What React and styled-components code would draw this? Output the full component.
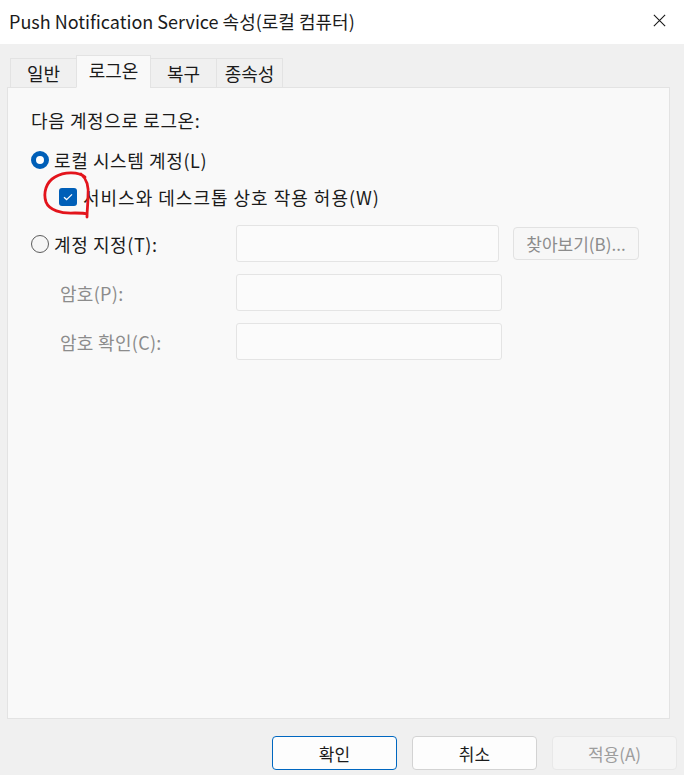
import React from "react";
import styled, { createGlobalStyle } from "styled-components";

const GlobalStyle = createGlobalStyle`
    html, body {
        margin: 0;
        padding: 0;
        background: #f0f0f0;
    }
    body {
        font-family: "Noto Sans CJK KR", "Noto Sans", sans-serif;
        color: #1b1b1b;
    }
`;

const tabs = ["일반", "로그온", "복구", "종속성"];

function Radio({ checked }) {
    return <RadioCircle $checked={checked} />;
}

function App() {
    return (
        <Window>
            <GlobalStyle />
            <TitleBar>
                <Title>Push Notification Service 속성(로컬 컴퓨터)</Title>
                <CloseIcon viewBox="0 0 16 16">
                    <path d="M2 2 L14 14 M14 2 L2 14" stroke="#1b1b1b" strokeWidth="1.2" />
                </CloseIcon>
            </TitleBar>
            <Body>
                <TabRow>
                    {tabs.map((t, i) => (
                        <Tab key={t} $active={i === 1} $w={i === 1 ? 75 : 67}>
                            {t}
                        </Tab>
                    ))}
                </TabRow>
                <Panel>
                    <Heading>다음 계정으로 로그온:</Heading>
                    <OptionRow>
                        <Radio checked />
                        <Label>로컬 시스템 계정(L)</Label>
                    </OptionRow>
                    <CheckRow>
                        <Checkbox>
                            <svg width="12" height="10" viewBox="0 0 12 10">
                                <path d="M2 5.2 L4.6 7.6 L10 2.4" fill="none" stroke="#fff" strokeWidth="1.3" />
                            </svg>
                        </Checkbox>
                        <Label $spacing={1}>서비스와 데스크톱 상호 작용 허용(W)</Label>
                        {/* red marker annotation drawn over the checkbox */}
                        <Scribble viewBox="0 0 52 48">
                            <path
                                d="M44 6 C38 1 24 0 14 6 C5 11 2 22 5 31 C8 39 20 43 34 42 C40 42 44 42 46 43 M40 3 C46 8 48 16 47 26 C47 33 46 39 46 46"
                                fill="none"
                                stroke="#e3141c"
                                strokeWidth="2.8"
                                strokeLinecap="round"
                                strokeLinejoin="round"
                            />
                        </Scribble>
                    </CheckRow>
                    <FormGrid>
                        <OptionRow>
                            <Radio />
                            <Label>계정 지정(T):</Label>
                        </OptionRow>
                        <Field $w={263} />
                        <BrowseButton>찾아보기(B)...</BrowseButton>
                        <SubLabel>암호(P):</SubLabel>
                        <Field $w={266} />
                        <span />
                        <SubLabel>암호 확인(C):</SubLabel>
                        <Field $w={266} />
                        <span />
                    </FormGrid>
                </Panel>
                <Footer>
                    <DialogButton $variant="primary">확인</DialogButton>
                    <DialogButton>취소</DialogButton>
                    <DialogButton $variant="disabled">적용(A)</DialogButton>
                </Footer>
            </Body>
        </Window>
    );
}

export default App;

const Window = styled.div`
    width: 684px;
    height: 775px;
    display: flex;
    flex-direction: column;
    background: #f0f0f0;
    overflow: hidden;
`;
const TitleBar = styled.div`
    height: 44px;
    background: #ffffff;
    display: flex;
    align-items: center;
    justify-content: space-between;
    padding: 0 17px 0 9px;
    flex-shrink: 0;
`;
const Title = styled.div`
    font-size: 18px;
    color: #1b1b1b;
    margin-top: -3px;
`;
const CloseIcon = styled.svg`
    width: 15px;
    height: 15px;
    margin-top: -3px;
`;
const Body = styled.div`
    flex: 1;
    display: flex;
    flex-direction: column;
    padding: 12px 14px 4px 7px;
`;
const TabRow = styled.div`
    display: flex;
    align-items: flex-end;
    padding-left: 3px;
    height: 32px;
    margin-bottom: -1px;
    position: relative;
    z-index: 1;
`;
const Tab = styled.div`
    width: ${(p) => p.$w}px;
    height: ${(p) => (p.$active ? 33 : 30)}px;
    box-sizing: border-box;
    display: flex;
    align-items: center;
    justify-content: center;
    font-size: 18px;
    background: ${(p) => (p.$active ? "#f9f9f9" : "#f0f0f0")};
    border: 1px solid #e3e3e3;
    border-bottom: ${(p) => (p.$active ? "1px solid #f9f9f9" : "1px solid #e3e3e3")};
    margin-right: -1px;
    padding-bottom: ${(p) => (p.$active ? 4 : 0)}px;
`;
const Panel = styled.div`
    flex: 1;
    background: #f9f9f9;
    border: 1px solid #e3e3e3;
    box-sizing: border-box;
    padding: 20px 24px 0 23px;
    display: flex;
    flex-direction: column;
    max-height: 632px;
`;
const Heading = styled.div`
    font-size: 18px;
    letter-spacing: 0.6px;
    height: 24px;
    line-height: 24px;
    margin-bottom: 16px;
`;
const OptionRow = styled.div`
    display: flex;
    align-items: center;
    gap: 5px;
    height: 24px;
`;
const RadioCircle = styled.span`
    width: 18px;
    height: 18px;
    box-sizing: border-box;
    border-radius: 50%;
    flex-shrink: 0;
    border: ${(p) => (p.$checked ? "5px solid #005fb8" : "1.3px solid #5d5d5d")};
    background: ${(p) => (p.$checked ? "#ffffff" : "#f6f6f6")};
`;
const Label = styled.span`
    font-size: 18px;
    color: #1b1b1b;
    letter-spacing: ${(p) => p.$spacing ?? 0.6}px;
`;
const CheckRow = styled.div`
    position: relative;
    display: flex;
    align-items: center;
    gap: 6px;
    margin: 13px 0 0 28px;
    height: 24px;
`;
const Checkbox = styled.span`
    width: 18px;
    height: 18px;
    border-radius: 3px;
    background: #005fb8;
    display: flex;
    align-items: center;
    justify-content: center;
    flex-shrink: 0;
`;
const Scribble = styled.svg`
    position: absolute;
    left: -18px;
    top: -14px;
    width: 52px;
    height: 48px;
    pointer-events: none;
`;
const FormGrid = styled.div`
    display: grid;
    grid-template-columns: 205px auto 1fr;
    grid-auto-rows: 37px;
    row-gap: 12px;
    align-items: center;
    margin-top: 16px;
`;
const SubLabel = styled.span`
    font-size: 18px;
    color: #8c8c8c;
    padding-left: 29px;
    letter-spacing: 0.3px;
`;
const Field = styled.div`
    width: ${(p) => p.$w}px;
    height: 37px;
    box-sizing: border-box;
    background: #fbfbfb;
    border: 1px solid #e4e4e4;
    border-radius: 3px;
`;
const BrowseButton = styled.div`
    width: 126px;
    height: 33px;
    margin-left: 11px;
    box-sizing: border-box;
    border: 1px solid #e2e2e2;
    border-radius: 4px;
    background: #f7f7f7;
    color: #8c8c8c;
    font-size: 17px;
    display: flex;
    align-items: center;
    justify-content: center;
`;
const Footer = styled.div`
    display: flex;
    justify-content: flex-end;
    gap: 15px;
    margin-top: 17px;
    margin-right: -7px;
`;
const DialogButton = styled.div`
    width: 125px;
    height: 34px;
    box-sizing: border-box;
    border-radius: 4px;
    display: flex;
    align-items: center;
    justify-content: center;
    font-size: 17px;
    background: ${(p) => (p.$variant === "disabled" ? "#f5f5f5" : "#fdfdfd")};
    color: ${(p) => (p.$variant === "disabled" ? "#9d9d9d" : "#1b1b1b")};
    border: ${(p) =>
        p.$variant === "primary"
            ? "1.5px solid #0067c0"
            : p.$variant === "disabled"
            ? "1px solid #e8e8e8"
            : "1px solid #d3d3d3"};
`;
